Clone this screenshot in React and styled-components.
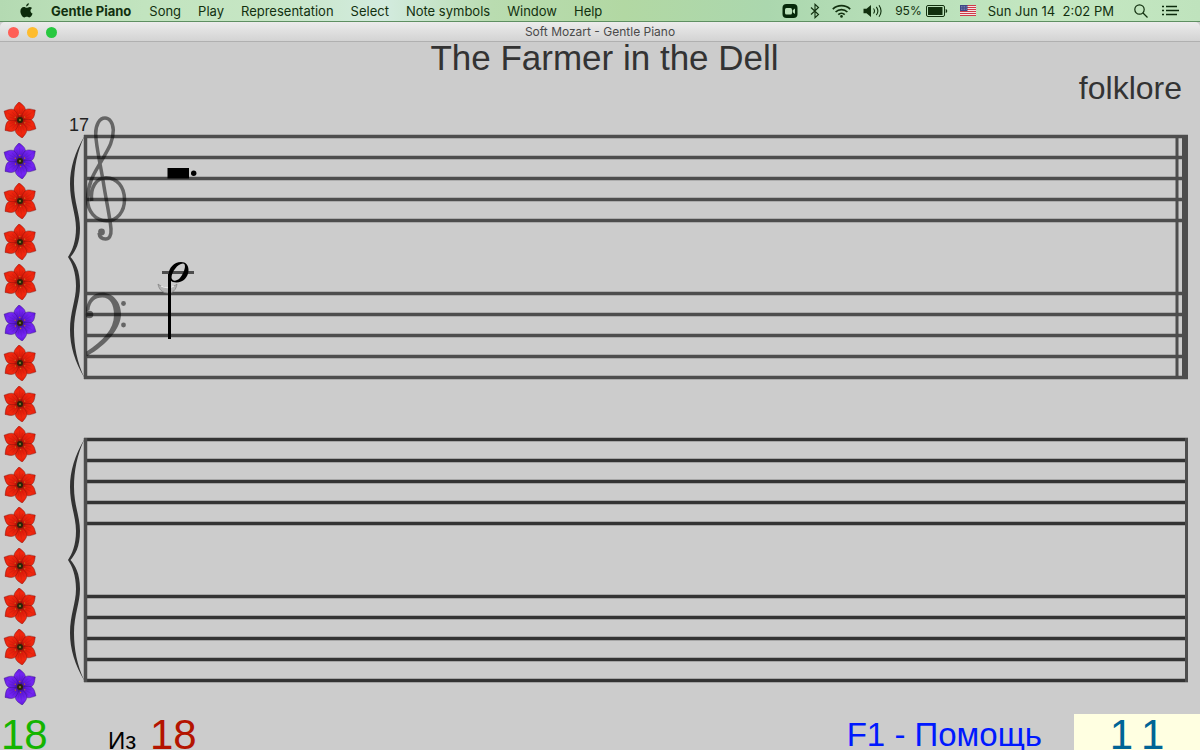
import React from 'react';
import styled, { createGlobalStyle } from 'styled-components';

const GlobalStyle = createGlobalStyle`
  * {
    box-sizing: border-box;
  }
  body {
    margin: 0;
    background-color: #cccccc;
    font-family: 'Liberation Sans', Arial, sans-serif;
  }
`;

const Page = styled.div`
  height: 100vh;
  display: flex;
  flex-direction: column;
  overflow: hidden;
`;

const MenuBar = styled.header`
  height: 22px;
  flex-shrink: 0;
  display: flex;
  align-items: center;
  justify-content: space-between;
  padding: 0 21px 0 20px;
  border-bottom: 1px solid #5f8f62;
  background: linear-gradient(
    90deg,
    #b4dab2 0%,
    #c2e4bf 12%,
    #c6e6c4 22%,
    #d3ebdf 32%,
    #b9dcb0 41%,
    #b2d8a3 52%,
    #abd7ae 64%,
    #b9e0ba 76%,
    #c5e8c2 88%,
    #bfe3bd 100%
  );
  color: #12300f;
  font-family: Inter, sans-serif;
  font-size: 13px;
  line-height: 20px;
`;

const MenuList = styled.nav`
  display: flex;
  align-items: center;
  gap: 17px;
`;

const MenuButton = styled.button`
  padding: ${(props) => (props.$bold ? '0 1px' : '0')};
  border: 0;
  background: none;
  color: inherit;
  font: inherit;
  font-weight: ${(props) => (props.$bold ? 700 : 400)};
  white-space: pre;
  svg {
    display: block;
  }
`;

const StatusList = styled.div`
  display: flex;
  align-items: center;
  gap: 12px;
`;

const MenuExtras = styled.div`
  display: flex;
  align-items: center;
  gap: 14px;
  padding-left: 8px;
`;

const Battery = styled.div`
  display: flex;
  align-items: center;
  gap: 4px;
  font-size: 12px;
  svg {
    display: block;
  }
`;

const TitleBar = styled.div`
  height: 20px;
  flex-shrink: 0;
  display: grid;
  grid-template-columns: 1fr auto 1fr;
  align-items: center;
  padding: 0 8px;
  border-bottom: 1px solid #b0b0b0;
  border-radius: 5px 5px 0 0;
  background: linear-gradient(#ececec, #d3d3d3);
  color: #4a4a4a;
  font-family: Inter, sans-serif;
  font-size: 12px;
  line-height: 20px;
`;

const WindowButtons = styled.div`
  display: flex;
  gap: 8px;
`;

const WindowButton = styled.button`
  width: 11px;
  height: 11px;
  padding: 0;
  border: 0;
  border-radius: 50%;
  background-color: ${(props) => props.$color};
`;

const SongHeader = styled.div`
  height: 60px;
  flex-shrink: 0;
  padding: 0 18px 0 27px;
  color: #333333;
`;

const SongTitle = styled.h1`
  margin: 0;
  text-align: center;
  font-size: 35px;
  font-weight: 400;
  line-height: 32px;
`;

const Composer = styled.div`
  text-align: right;
  font-size: 32px;
  line-height: 28px;
`;

const Body = styled.main`
  display: flex;
  gap: 20px;
  padding-right: 12px;
`;

const FlowerList = styled.ul`
  width: 40px;
  margin: 0 0 3px;
  padding: 0 2px;
  list-style: none;
  display: flex;
  flex-direction: column;
  justify-content: space-between;
  svg {
    display: block;
  }
`;

const Score = styled.div`
  flex: 1;
  min-width: 0;
`;

const SystemSvg = styled.svg`
  display: block;
  width: 100%;
  height: 303px;
  overflow: visible;
`;

const Footer = styled.footer`
  flex: 1;
  min-height: 0;
  display: flex;
  justify-content: space-between;
  align-items: stretch;
  padding-top: 6px;
`;

const Progress = styled.div`
  display: flex;
  align-items: baseline;
  padding-left: 1px;
  line-height: 42px;
`;

const Count = styled.span`
  width: ${(props) => props.$width};
  color: ${(props) => props.$color};
  font-size: 42px;
`;

const Of = styled.span`
  width: 42px;
  color: #000000;
  font-size: 24px;
`;

const FooterRight = styled.div`
  display: flex;
  gap: 32px;
`;

const HelpButton = styled.button`
  padding: 0;
  border: 0;
  background: none;
  color: #0019ff;
  font: inherit;
  font-size: 33px;
  line-height: 42px;
`;

const Counter = styled.div`
  width: 126px;
  display: flex;
  justify-content: center;
  gap: 8px;
  background-color: #ffffe1;
  color: #006496;
  font-size: 42px;
  line-height: 42px;
`;

const menus = ['Song', 'Play', 'Representation', 'Select', 'Note symbols', 'Window', 'Help'];

const RED = 'red';
const PURPLE = 'purple';
const flowers = [
  RED, PURPLE, RED, RED, RED, PURPLE, RED, RED,
  RED, RED, RED, RED, RED, RED, PURPLE,
];

const petalColors = {
  red: { light: '#f0280f', base: '#e01c0a', dark: '#7d1008' },
  purple: { light: '#7426f2', base: '#6018dc', dark: '#341178' },
};

const trebleLines = [34.5, 55.5, 76.5, 97.5, 118.5];
const bassLines = [191.5, 212.5, 233.5, 254.5, 275.5];

const AppleIcon = () => (
  <svg width='13' height='15' viewBox='0 0 24 28' fill='#0c2a0c'>
    <path d='M16.5 0.5c.2 2.8-2.3 5.9-5.2 5.8C11 3.500 13.700.7 16.500.5z' />
    <path d='M22.300 9.200c-4.500 2.900-3.400 8.700 1 10.400-1.200 3.500-3.500 7.400-6.200 7.400-1.800 0-2.400-1.100-4.600-1.100S9.600 27 8 27C4.200 27 .6 20.300.6 15.400c0-5 3.100-8 6.400-8 2.200 0 3.900 1.400 5.400 1.400 1.300 0 3.200-1.500 5.700-1.500 1.500 0 3.200.6 4.200 1.900z' />
  </svg>
);

const ZoomIcon = () => (
  <svg width='16' height='16' viewBox='0 0 16 16'>
    <rect x='0.5' y='1' width='15' height='14' rx='4' fill='#06280a' />
    <rect x='3' y='5' width='7' height='6.500' rx='1.500' fill='#b9dfb9' />
    <path d='M10.700 7.200l2.300-1.700v5.500l-2.300-1.700z' fill='#b9dfb9' />
  </svg>
);

const BluetoothIcon = () => (
  <svg width='10' height='16' viewBox='0 0 10 16' fill='none' stroke='#12300f' strokeWidth='1.100'>
    <path d='M1 4.500l7.500 7L5 14.700V1.300l3.500 3.200L1 11.500' />
  </svg>
);

const WifiIcon = () => (
  <svg width='19' height='14' viewBox='0 0 19 14' fill='none' stroke='#12300f' strokeWidth='1.700'>
    <path d='M.8 5.200a12.500 12.500 0 0 1 17.400 0M3.600 8a8.400 8.400 0 0 1 11.800 0M6.300 10.600a4.600 4.600 0 0 1 6.400 0' />
    <circle cx='9.500' cy='12.400' r='1.300' fill='#12300f' stroke='none' />
  </svg>
);

const VolumeIcon = () => (
  <svg width='20' height='14' viewBox='0 0 20 14' fill='none' stroke='#12300f' strokeWidth='1.100'>
    <path d='M.5 4.800h3L8 1v12L3.500 9.200h-3z' fill='#12300f' stroke='none' />
    <path d='M10.500 4.500a4 4 0 0 1 0 5M13.300 2.800a7 7 0 0 1 0 8.400M16 1.200a10 10 0 0 1 0 11.600' />
  </svg>
);

const BatteryIcon = () => (
  <svg width='22' height='12' viewBox='0 0 22 12'>
    <rect x='.5' y='.5' width='18' height='11' rx='1.500' fill='none' stroke='#12300f' />
    <rect x='2' y='2' width='14.500' height='8' fill='#12300f' />
    <path d='M19.700 4c2 .6 2 3.400 0 4z' fill='#12300f' />
  </svg>
);

const FlagIcon = () => (
  <svg width='16' height='11' viewBox='0 0 16 11'>
    <rect width='16' height='11' fill='#f1e4e4' />
    {[0, 2, 4, 6, 8, 10].map((y) => (
      <rect key={y} y={y} width='16' height='1' fill='#cf3b48' />
    ))}
    <rect width='7.500' height='6' fill='#3d4686' />
    <path d='M1 1.500h6M1 3h6M1 4.500h6' stroke='#a9aed0' strokeWidth='.6' strokeDasharray='.8 .8' />
  </svg>
);

const SearchIcon = () => (
  <svg width='14' height='14' viewBox='0 0 14 14' fill='none' stroke='#12300f' strokeWidth='1.200'>
    <circle cx='5.500' cy='5.500' r='4.700' />
    <path d='M9 9l4.500 4.500' />
  </svg>
);

const ListIcon = () => (
  <svg width='17' height='11' viewBox='0 0 17 11' stroke='#0c2a0c' strokeWidth='1.600'>
    <path d='M0 1.500h2M0 5.500h2M0 9.500h2M4 1.500h11M4 5.500h13M4 9.500h11' />
  </svg>
);

const Flower = ({ kind }) => {
  const { light, base, dark } = petalColors[kind];
  const id = `petal-${kind}`;
  return (
    <svg width='36' height='36' viewBox='-18 -18 36 36' role='img' aria-label={`${kind} flower`}>
      <defs>
        <radialGradient id={id} gradientUnits='userSpaceOnUse' cx='0' cy='0' r='18'>
          <stop offset='0.080' stopColor={dark} />
          <stop offset='0.350' stopColor={base} />
          <stop offset='0.750' stopColor={light} />
          <stop offset='1' stopColor={base} />
        </radialGradient>
      </defs>
      {[-2, 58, 120, 174, 236, 300].map((angle) => (
        <g key={angle} transform={`rotate(${angle})`}>
          <path
            d='M0 0C-2-3-5-6-5.800-9.500C-6-13-3.500-15-.3-18.200C3.500-15 6-13 5.800-9.500C5-6 2-3 0 0z'
            fill={`url(#${id})`}
            stroke={dark}
            strokeWidth='.5'
            strokeOpacity='.8'
          />
          <path d='M0-6V-14M-1.500-6L-3-11M1.500-6L3-11' stroke={dark} strokeWidth='.4' opacity='.3' />
          <circle cx='0' cy='-5.500' r='.7' fill='#c9701a' />
        </g>
      ))}
      <circle r='3' fill='#2b2408' />
      <circle r='1.100' fill='#8c8a2a' />
    </svg>
  );
};

const Brace = () => (
  <path
    fill='#333333'
    d='M24.500 34C15 50 10 66 10 82C10 100 16 112 16 126C16 140 12 149 8 155C12 161 16 170 16 184C16 198 10 210 10 228C10 244 15 260 24.500 276C17 260 14 244 14 228C14 210 20 198 20 184C20 168 15 160 10.500 155C15 150 20 142 20 126C20 112 14 100 14 82C14 66 17 50 24.500 34z'
  />
);

const TrebleClef = () => (
  <g opacity='0.500'>
    <path
      d='M31.700 99C30 86 36 75.700 46 75.700C57 75.700 64.500 85 64.500 97.500C64.500 110 57 118.700 46.700 118.700C35 118.700 27.500 109 27.500 97C28 80 35 70 40 61.500C46 50 53.300 42 53.300 28C53 20 49 16 45 16C39.500 16 35.500 23 35.700 32C36 44 40 60 43.300 80C46 98 50 115 51 127C51.500 134 49 137 45.500 137C42 137 39.500 135 39 131'
      fill='none'
      stroke='#000000'
      strokeWidth='3.500'
    />
    <circle cx='41.500' cy='130' r='3.400' />
  </g>
);

const BassClef = () => (
  <g opacity='0.500'>
    <path d='M26 210C26 198 33 190.700 42.300 190.700C53 190.700 61 200 61 212C61 226 48 242 26.500 254.500V249.500C43 239 54 227 54 213C54 202 50 195.500 42.300 195.500C35 195.500 30 200 29.500 208z' />
    <circle cx='29.500' cy='212.500' r='3.800' />
    <circle cx='63.500' cy='201.500' r='2.400' />
    <circle cx='63.500' cy='223' r='2.400' />
  </g>
);

const HalfNote = () => (
  <g>
    <path d='M98 182C99 188 103 191 108 191S116 188 117 182C113 186 103 187 98 182z' fill='#b4b4b4' stroke='#858585' strokeWidth='.8' />
    <path d='M101 184C104 186 111 186 114 184' stroke='#e6e6e6' strokeWidth='1.500' fill='none' />
    <path d='M102 170.500h32' stroke='#4d4d4d' strokeWidth='3' />
    <path d='M109.500 172V237' stroke='#000000' strokeWidth='3' />
    <path
      fillRule='evenodd'
      d='M121 160C126 160 128.500 163.500 128.500 168C128.500 175 123 180.500 116.500 180.500C111 180.500 108.500 177 108.500 173C108.500 166 114 160 121 160zM123 161.500C117.500 161.500 111.500 170.500 111.500 175.500C112 179.500 116 179.500 119.500 176.500C123.500 172.500 127.500 162 123 161.500z'
    />
  </g>
);

const WholeRest = () => (
  <g>
    <rect x='107.500' y='66' width='21.500' height='10.500' />
    <circle cx='133.700' cy='71.200' r='2.700' />
  </g>
);

const System = ({ lineColor, final, children }) => (
  <SystemSvg>
    <Brace />
    {[...trebleLines, ...bassLines].map((y) => (
      <line key={y} x1='24' x2='100%' y1={y} y2={y} stroke={lineColor} strokeWidth='3.500' />
    ))}
    <path d='M25.500 33V277' stroke='#4d4d4d' strokeWidth='3.500' />
    <svg x='100%' overflow='visible'>
      {final ? (
        <>
          <rect x='-12.500' y='33' width='3' height='244' fill='#4d4d4d' />
          <rect x='-6' y='33' width='6' height='244' fill='#4d4d4d' />
        </>
      ) : (
        <rect x='-3' y='33' width='3' height='244' fill='#4d4d4d' />
      )}
    </svg>
    {children}
  </SystemSvg>
);

export default () => (
  <>
    <GlobalStyle />
    <Page>
      <MenuBar>
        <MenuList>
          <MenuButton aria-label='Apple'>
            <AppleIcon />
          </MenuButton>
          <MenuButton $bold>Gentle Piano</MenuButton>
          {menus.map((menu) => (
            <MenuButton key={menu}>{menu}</MenuButton>
          ))}
        </MenuList>
        <StatusList>
          <ZoomIcon />
          <BluetoothIcon />
          <WifiIcon />
          <VolumeIcon />
          <Battery>
            95%
            <BatteryIcon />
          </Battery>
          <FlagIcon />
          <MenuButton>Sun Jun 14  2:02 PM</MenuButton>
          <MenuExtras>
            <MenuButton aria-label='Search'>
              <SearchIcon />
            </MenuButton>
            <MenuButton aria-label='Notifications'>
              <ListIcon />
            </MenuButton>
          </MenuExtras>
        </StatusList>
      </MenuBar>
      <TitleBar>
        <WindowButtons>
          <WindowButton $color='#ff5f57' aria-label='Close' />
          <WindowButton $color='#febc2e' aria-label='Minimize' />
          <WindowButton $color='#28c840' aria-label='Zoom' />
        </WindowButtons>
        <span>Soft Mozart - Gentle Piano</span>
      </TitleBar>
      <SongHeader>
        <SongTitle>The Farmer in the Dell</SongTitle>
        <Composer>folklore</Composer>
      </SongHeader>
      <Body>
        <FlowerList>
          {flowers.map((kind, index) => (
            <li key={index}>
              <Flower kind={kind} />
            </li>
          ))}
        </FlowerList>
        <Score>
          <System lineColor='#4d4d4d' final>
            <text x='9' y='29' fontSize='18' fill='#222222'>
              17
            </text>
            <TrebleClef />
            <BassClef />
            <WholeRest />
            <HalfNote />
          </System>
          <System lineColor='#333333' />
        </Score>
      </Body>
      <Footer>
        <Progress>
          <Count $color='#14b400' $width='107px'>18</Count>
          <Of>Из</Of>
          <Count $color='#b41400' $width='auto'>18</Count>
        </Progress>
        <FooterRight>
          <HelpButton>F1 - Помощь</HelpButton>
          <Counter>
            <span>1</span>
            <span>1</span>
          </Counter>
        </FooterRight>
      </Footer>
    </Page>
  </>
);
